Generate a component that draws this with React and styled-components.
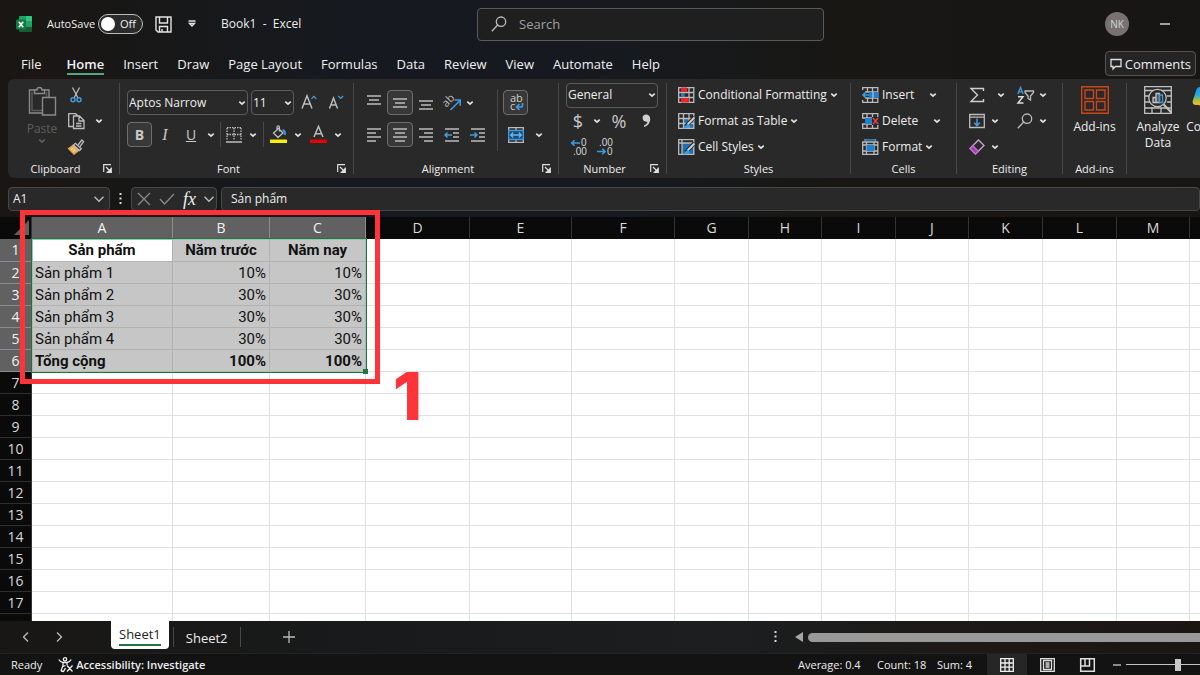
import React from "react";
import styled, { createGlobalStyle, css } from "styled-components";

const UI = `"Open Sans", "Noto Sans", sans-serif`;
const CELL = `Roboto, "Noto Sans", sans-serif`;

const GlobalStyle = createGlobalStyle`
  *, *::before, *::after { box-sizing: border-box; }
  body { margin: 0; background: #0a0a0a; }
  button, input, select { font: inherit; color: inherit; }
  button { padding: 0; border: 0; background: none; cursor: pointer; }
`;

const Window = styled.div`
  display: flex;
  flex-direction: column;
  height: 100vh;
  overflow: hidden;
  color: #eeeeee;
  font: 12px/16px ${UI};
  background: linear-gradient(90deg, #1a1613 0%, #171819 16%, #161a20 30%, #161a20 48%, #181714 70%, #171614 100%);
  svg { display: block; flex: none; overflow: visible; }
`;

/* ---------- title bar ---------- */
const TitleBar = styled.header`
  display: grid;
  grid-template-columns: 477px minmax(0, 347px) 1fr;
  align-items: center;
  height: 48px;
`;
const TitleLeft = styled.div`
  display: flex;
  align-items: center;
  padding-left: 16px;
`;
const AutoSave = styled.label`
  display: flex;
  align-items: center;
  gap: 3px;
  margin: 0 12px 0 14px;
  font-size: 11px;
`;
const Toggle = styled.span`
  display: grid;
  align-items: center;
  width: 45px;
  height: 20px;
  > * { grid-area: 1 / 1; }
  > span { padding-left: 22px; pointer-events: none; }
`;
const Switch = styled.input`
  appearance: none;
  display: flex;
  align-items: center;
  width: 100%;
  height: 20px;
  margin: 0;
  padding-left: 2px;
  border: 1px solid #bdbdbd;
  border-radius: 10px;
  background: #2b2b2b;
  &::before {
    content: "";
    width: 14px;
    height: 14px;
    border-radius: 50%;
    background: #fff;
  }
`;
const QuickMenu = styled.button` margin: 0 25px 0 16px; `;
const DocName = styled.span` white-space: pre; `;
const SearchBox = styled.label`
  display: flex;
  align-items: center;
  gap: 12px;
  height: 33px;
  padding-left: 13px;
  border: 1px solid #5a5a5a;
  border-radius: 4px;
  background: #1f1f1f;
  color: #a6a6a6;
`;
const BareInput = styled.input`
  flex: 1;
  min-width: 0;
  padding: 0;
  border: 0;
  outline: 0;
  background: none;
  font-size: 13px;
  &::placeholder { color: #a0a0a0; opacity: 1; }
`;
const TitleRight = styled.div`
  display: flex;
  align-items: center;
  justify-content: flex-end;
  gap: 31px;
  padding-right: 30px;
`;
const Avatar = styled.button`
  width: 24px;
  height: 24px;
  border-radius: 50%;
  background: #777271;
  color: #d8d5d4;
  font-size: 10px;
`;

/* ---------- ribbon tabs ---------- */
const TabRow = styled.nav`
  display: flex;
  align-items: center;
  gap: 19px;
  height: 31px;
  padding: 0 4px 0 21px;
  font-size: 13px;
`;
const Tab = styled.a`
  display: block;
  height: 23px;
  padding-top: 3px;
  line-height: 18px;
  color: #f0f0f0;
  text-decoration: none;
  white-space: nowrap;
  border-bottom: 2px solid transparent;
  &:first-child { margin-right: 6px; }
  ${(p) => p.$active && css`
    font-weight: 600;
    border-color: #57a67c;
  `}
`;
const Comments = styled.button`
  display: flex;
  align-items: center;
  gap: 3px;
  height: 25px;
  margin-left: auto;
  padding: 0 4px;
  border: 1px solid #555;
  border-radius: 4px;
  background: #242424;
`;

/* ---------- ribbon ---------- */
const Ribbon = styled.section`
  display: flex;
  height: 99px;
  margin-left: 8px;
  border-radius: 6px 0 0 6px;
  background: #292929;
  overflow: hidden;
`;
const GroupBox = styled.div`
  display: flex;
  flex-direction: column;
  flex: ${(p) => (p.$w ? `0 0 ${p.$w}px` : "1 0 0")};
  min-width: 0;
  padding: 3px 0 1px;
`;
const Rule = styled.div`
  flex: none;
  width: 1px;
  height: ${(p) => p.$h || 91}px;
  margin: ${(p) => p.$m || "4px 0"};
  background: #484848;
`;
const GroupBody = styled.div`
  display: flex;
  height: 78px;
  padding-left: ${(p) => p.$pad || 0}px;
`;
const GroupFoot = styled.div`
  display: grid;
  grid-template-columns: ${(p) => (p.$launcher ? "1fr 16px" : "1fr")};
  align-items: center;
  height: 17px;
  font-size: 11px;
  text-align: center;
  white-space: nowrap;
`;
const Stack = styled.div`
  display: flex;
  flex-direction: column;
  gap: ${(p) => p.$gap || 0}px;
  padding-top: ${(p) => p.$top || 0}px;
`;
const Row = styled.div`
  display: flex;
  align-items: center;
  gap: ${(p) => p.$gap || 0}px;
  height: ${(p) => p.$h || 26}px;
`;
const Tool = styled.button`
  display: grid;
  place-items: center;
  flex: none;
  width: ${(p) => p.$w || 26}px;
  height: 25px;
  border: 1px solid ${(p) => (p.$on ? "#6e6e6e" : "transparent")};
  border-radius: 4px;
  background: ${(p) => (p.$on ? "#383838" : "none")};
`;
const Letter = styled.span`
  font-family: ${(p) => (p.$serif ? `"Liberation Serif", serif` : UI)};
  font-size: ${(p) => p.$size || 14}px;
  line-height: 20px;
  font-weight: ${(p) => p.$weight || 400};
  color: #c8c8c8;
`;
const SelectWrap = styled.label`
  display: grid;
  align-items: center;
  width: ${(p) => p.$w}px;
  > * { grid-area: 1 / 1; }
  > svg { justify-self: end; margin-right: 2px; pointer-events: none; }
`;
const Select = styled.select`
  appearance: none;
  width: 100%;
  height: 25px;
  padding: 0 1px;
  border: 1px solid #5c5c5c;
  border-radius: 4px;
  background: #292929;
  font-size: 12px;
`;
const Command = styled.button`
  display: flex;
  align-items: center;
  gap: 3px;
  height: 26px;
  white-space: nowrap;
  > svg:last-child { margin-left: ${(p) => p.$space || 0}px; }
`;
const BigButton = styled.button`
  display: flex;
  flex-direction: column;
  align-items: center;
  flex: none;
  width: ${(p) => p.$w}px;
  padding-top: 4px;
  color: ${(p) => (p.$dim ? "#5e5e5e" : "inherit")};
  > span { padding-top: 5px; line-height: 16px; }
`;

/* ---------- formula bar ---------- */
const FormulaBar = styled.div`
  display: flex;
  height: 24px;
  margin: 9px 0 6px 8px;
`;
const Field = styled.label`
  display: flex;
  align-items: center;
  flex: ${(p) => (p.$w ? `0 0 ${p.$w}px` : "1 1 0")};
  min-width: 0;
  padding: 0 5px 0 ${(p) => p.$pad || 4}px;
  border: 1px solid #474747;
  border-radius: 4px;
  background: #292929;
  input { width: 0; font-size: 12px; }
`;
const Dots = styled.div`
  display: grid;
  place-items: center;
  flex: none;
  width: 21px;
`;
const FxGroup = styled.div`
  display: flex;
  align-items: center;
  justify-content: space-between;
  flex: none;
  width: 86px;
  margin-right: 4px;
  padding: 0 2px 0 5px;
  border: 1px solid #474747;
  border-radius: 4px;
  background: #292929;
`;
const Fx = styled.span`
  font: italic 18px/20px "Liberation Serif", serif;
`;

/* ---------- sheet ---------- */
const SheetArea = styled.main`
  position: relative;
  flex: 1;
  min-height: 0;
  background: #fff;
`;
const SheetClip = styled.div`
  height: 100%;
  overflow: hidden;
`;
const Grid = styled.table`
  table-layout: fixed;
  width: 1264px;
  border-collapse: separate;
  border-spacing: 0;
  font: 15px/20px ${CELL};
  color: #111;
`;
const HeadCell = styled.th`
  height: 22px;
  padding: 0;
  font: 14px/20px ${UI};
  color: ${(p) => (p.$on ? "#f2f2f2" : "#d8d8d8")};
  background: ${(p) => (p.$on ? "#616161" : "#0a0a0a")};
  border-right: 1px solid ${(p) => (p.$on ? "#8c8c8c" : "#333")};
  border-bottom: 1px solid ${(p) => (p.$row ? (p.$on ? "#8c8c8c" : "#2e2e2e") : "transparent")};
`;
const Corner = styled(HeadCell)`
  svg { margin-left: auto; }
`;
const SheetRow = styled.tr`
  &:first-child > * { height: 23px; }
`;
const Cell = styled.td`
  height: 22px;
  padding: 0 3px;
  white-space: nowrap;
  border-right: 1px solid #e1e1e1;
  border-bottom: 1px solid #e1e1e1;
  text-align: ${(p) => p.$align || "left"};
  font-weight: ${(p) => (p.$bold ? 700 : 400)};
  ${(p) => p.$picked && css`
    background: #c6c6c6;
    border-color: #b2b2b2;
  `}
  ${(p) => p.$active && css`
    background: #fff;
  `}
`;
const Selection = styled.div`
  position: absolute;
  left: 31px;
  top: 21px;
  width: 336px;
  height: 135px;
  border: 1px solid #217346;
  outline: 1px solid #9fc2ae;
  outline-offset: -2px;
  &::after {
    content: "";
    position: absolute;
    right: -2px;
    bottom: -2px;
    width: 5px;
    height: 5px;
    background: #217346;
  }
`;
const Callout = styled.div`
  position: absolute;
  left: 20px;
  top: -7px;
  width: 360px;
  height: 174px;
  border: 5px solid #ff3338;
`;
const CalloutNumber = styled.div`
  position: absolute;
  left: 393px;
  top: 146px;
  font: 800 66px/66px Inter, sans-serif;
  color: #ff3338;
`;

/* ---------- bottom bars ---------- */
const SheetBar = styled.nav`
  display: flex;
  align-items: center;
  height: 32px;
  padding-left: 22px;
  background: linear-gradient(90deg, #181715, #191b1d 40%, #1c1e20 60%, #1c1917 80%, #1c1613);
`;
const SheetTab = styled.a`
  align-self: ${(p) => (p.$active ? "flex-start" : "center")};
  height: ${(p) => (p.$active ? 28 : 24)}px;
  padding: 3px 8px 0;
  border-radius: 0 0 4px 4px;
  font-size: 13px;
  line-height: 20px;
  color: #eee;
  text-decoration: none;
  ${(p) => p.$active && css`
    background: #fff;
    color: #222;
    > span { display: block; border-bottom: 2px solid #217346; }
  `}
`;
const NavButtons = styled.div`
  display: flex;
  gap: 25px;
  width: 89px;
`;
const AddSheet = styled.button` margin-left: 42px; `;
const ScrollGroup = styled.div`
  display: flex;
  align-items: center;
  gap: 5px;
  flex: 0 0 435px;
  margin-left: auto;
`;
const ScrollTrack = styled.div`
  display: flex;
  align-items: center;
  flex: 1;
  gap: 5px;
  padding-left: 4px;
`;
const ScrollThumb = styled.div`
  flex: 1;
  height: 9px;
  border-radius: 5px 0 0 5px;
  background: #999;
`;
const StatusBar = styled.footer`
  display: flex;
  align-items: center;
  height: 22px;
  padding-left: 11px;
  background: #131313;
  border-top: 1px solid #222;
  font-size: 11px;
  white-space: nowrap;
`;
const Accessibility = styled.button`
  display: flex;
  align-items: center;
  gap: 3px;
  margin-left: 16px;
  font-weight: 600;
`;
const Stats = styled.div`
  display: grid;
  grid-template-columns: 79px 60px 50px;
  margin-left: auto;
`;
const ViewButton = styled.button`
  display: grid;
  place-items: center;
  width: 40px;
  height: 21px;
  background: ${(p) => (p.$on ? "#262626" : "none")};
`;
const Zoom = styled.label`
  display: flex;
  align-items: center;
  gap: 5px;
  width: 93px;
  padding-left: 6px;
`;
const Range = styled.input`
  appearance: none;
  flex: 1;
  min-width: 0;
  height: 12px;
  margin: 0;
  background: linear-gradient(#c4c4c4, #c4c4c4) center / 100% 1px no-repeat;
  &::-webkit-slider-thumb {
    appearance: none;
    width: 6px;
    height: 12px;
    background: #c8c8c8;
  }
`;

/* ---------- icons ---------- */
const G = "#bcbcbc";
const B = "#3f9be0";
const SMALL = `"Liberation Sans", sans-serif`;
const Icon = ({ w = 16, h = w, box = `0 0 ${w} ${h}`, color = G, sw = 1.3, children }) => (
  <svg width={w} height={h} viewBox={box} fill="none" stroke={color} strokeWidth={sw} aria-hidden="true">
    {children}
  </svg>
);
const Chevron = ({ color = "#e4e4e4" }) => (
  <Icon w={8} color={color} sw={1.7}><path d="M1.300 2.700 4 5.200 6.700 2.700" /></Icon>
);
const WideChevron = () => <Icon w={10} sw={1.4}><path d="M.5 2.800 5 7.300 9.500 2.800" /></Icon>;
const Lines = ({ rows, y0 = 2, step = 4 }) => (
  <Icon sw={1.6}>
    <path d={rows.map(([a, b], i) => `M${a} ${y0 + i * step}H${b}`).join("")} />
  </Icon>
);
const Launcher = () => (
  <Icon w={9} color="#e0e0e0" sw={1.2}>
    <path d="M.7 8V.7H8M3 3l4 4M8.300 3.500v4.800H3.500" />
    <path d="M8 4v4H4z" fill="#e0e0e0" stroke="none" />
  </Icon>
);
const ExcelLogo = () => (
  <svg width="17" height="17" viewBox="0 0 17 17" aria-hidden="true">
    <path d="M4 0h11a1 1 0 0 1 1 1v4H3V1a1 1 0 0 1 1-1z" fill="#21a366" />
    <path d="M10 0h5a1 1 0 0 1 1 1v4h-6z" fill="#33c481" />
    <path d="M3 5h13v6H3z" fill="#107c41" />
    <path d="M10 5h6v6h-6z" fill="#21a366" />
    <path d="M3 11h13v4a1 1 0 0 1-1 1H4a1 1 0 0 1-1-1z" fill="#185c37" />
    <rect y="3.500" width="10" height="10" rx="1" fill="#107c41" />
    <path d="m2.800 5.800 4.400 5.400M7.200 5.800l-4.400 5.400" stroke="#fff" strokeWidth="1.500" />
  </svg>
);
const SaveIcon = () => (
  <Icon w={17} color="#e4e4e4" sw={1.4}>
    <path d="M1 1h15v15H3L1 14zM4.500 1v6h8V1M4.500 16v-5.500h8V16M7 16v-3" />
  </Icon>
);
const SearchIcon = () => (
  <Icon><circle cx="10" cy="5.700" r="4.700" /><path d="M6.700 9 .8 15.200" /></Icon>
);
const PasteIcon = () => (
  <Icon w={28} h={30} color="#8a8a8a" sw={1.4}>
    <path d="M14 27H1.500V4H7M16 4h5v7" />
    <path d="M4 6v18.500h10M18.500 6v5" stroke="#5a5a5a" />
    <path d="M6.500 7.500V4H9a2.500 2.500 0 0 1 5 0h2.500v3.500z" />
    <path d="M14.500 11.500h13v17.500h-13z" fill="#292929" />
  </Icon>
);
const CutIcon = () => (
  <Icon w={12} h={16}>
    <path d="M2.500.5 8 11M9.500.5 4 11" />
    <g stroke={B} strokeWidth="1.500"><circle cx="3" cy="12.800" r="2" /><circle cx="9" cy="12.800" r="2" /></g>
  </Icon>
);
const CopyIcon = () => (
  <Icon w={17}>
    <path d="M5.500 13.500H.7V.7h7l2 2M5.500 3h6l4.500 4.500v8H5.500zM11 3.500V8h5M8 10.500h5.500M8 13h5.500" />
  </Icon>
);
const PainterIcon = () => (
  <Icon>
    <path d="m10 6 3.800-5 1.800 1.600L12 7.500" />
    <path d="M5.500 6 .5 9.500 6 15.200l5-4z" fill="#e9b665" stroke="#d9a655" />
    <path d="m7.300 4.300 6 5.500-1.800 1.700-6-5.500z" fill="#292929" />
    <path d="m3 11 2-1.500M5 13l2-2" stroke="#fbe3b0" strokeWidth="1" />
  </Icon>
);
const BordersIcon = () => (
  <Icon>
    <path d="M1 .7h14M1 1v12M15 1v12M8 1v12M1 7.500h14" strokeDasharray="1.500 1" />
    <path d="M0 15h16" strokeWidth="1.600" />
  </Icon>
);
const FillIcon = () => (
  <Icon w={17} h={17}>
    <path d="M8.500 2.500 13 7l-5 4.500L3.500 7zM7 4.500V1a1.200 1.200 0 0 1 2.400 0v4.500" />
    <path d="M12.500 4c2 .5 2.800 2 2.300 5" stroke={B} strokeWidth="2" />
    <path d="M0 13.500h17V17H0z" fill="#f7f200" stroke="none" />
  </Icon>
);
const FontColorIcon = () => (
  <Icon w={17} h={17}>
    <path d="M4 11 8.500.5 13 11M5.500 7.700h6" strokeWidth="1.500" />
    <path d="M0 13.500h17V17H0z" fill="#e60000" stroke="none" />
  </Icon>
);
const SizeIcon = ({ up }) => (
  <Icon w={16} h={16}>
    <path d={up ? "M1 13.500 6 .8l5 12.700M2.700 9h6.600" : "M1.500 13.500 5.500 3l4 10.500M3 10h5"} strokeWidth="1.500" />
    <path d={up ? "m10.500 3.800 2.400-2.400 2.400 2.400" : "m10.300 1 2.400 2.400L15.100 1"} stroke={B} />
  </Icon>
);
const OrientationIcon = () => (
  <Icon w={17} h={17}>
    <text x="-1" y="10" transform="rotate(-45 5 8)" fontSize="11" fontFamily={UI} fill={G} stroke="none">ab</text>
    <path d="M6.500 16 15.500 7M10.500 6h5.700v5.700" stroke={B} strokeWidth="1.600" />
  </Icon>
);
const IndentIcon = ({ right }) => (
  <Icon sw={1.5}>
    <path d="M1 2h14M9 6h6M9 10h6M1 14h14" />
    <path d={right ? "M0 8h7M4.500 5.500 7 8l-2.500 2.500" : "M8 8H1M3.500 5.500 1 8l2.500 2.500"} stroke={B} />
  </Icon>
);
const WrapIcon = () => (
  <Icon w={16} h={18}>
    <text x="2" y="8" fontSize="11" fontFamily={UI} fill="#cfcfcf" stroke="none">ab</text>
    <text x="2" y="16" fontSize="11" fontFamily={UI} fill="#cfcfcf" stroke="none">c</text>
    <path d="M14.500 9v2q0 2-2 2H8.500M11.500 10 8.500 13l3 3" stroke={B} strokeWidth="1.700" />
  </Icon>
);
const MergeIcon = () => (
  <Icon>
    <path d="M.7.7h14.600v14.600H.7zM8 .7V4M8 12v3.300" />
    <path d="M.7 3.500h14.600v9H.7z" fill="#1a4a70" stroke={B} />
    <path d="M3 8h10M5.200 5.500 2.700 8l2.500 2.500M10.800 5.500 13.300 8l-2.500 2.500" stroke="#69b8f0" />
  </Icon>
);
const DecimalIcon = ({ less }) => (
  <Icon w={17} h={17}>
    <g fontSize="10" fontFamily={SMALL} fill="#d4d4d4" stroke="none">
      <text x={less ? 2 : 10} y="7">{less ? ".00" : "0"}</text>
      <text x={less ? 10 : 2} y="16">{less ? "0" : ".00"}</text>
    </g>
    <path d={less ? "M0 12.500h8M5.300 9.800 8 12.500l-2.700 2.700" : "M9 4H.8M3.500 1.300.8 4l2.700 2.700"} stroke={B} strokeWidth="1.600" />
  </Icon>
);
const GridBase = () => <path d="M.7.7h15.100v14.600H.7zM.7 5.500h15M.7 10.500h15M5.500.7v14.600M11 .7v14.600" />;
const CondIcon = () => (
  <Icon w={17} h={16}>
    <GridBase />
    <path d="M3 6.300h3.500v3.500H3z" fill="#2b7cc0" stroke="none" />
    <path d="M3 .5h6v4.500H3zM3 11h8v4.500H3z" fill="#e8262c" stroke="none" />
  </Icon>
);
const TableIcon = ({ full }) => (
  <Icon w={17} h={16}>
    <path d={full ? "M4 4h11.800v11H4z" : "M6 6h9.800v9H6z"} fill="#1f6fb5" stroke="none" />
    {full ? <path d="M.7.7h15.100v14.600H.7zM.7 4h15M4 .7v14.600" /> : <GridBase />}
    <path d="M16.500 4 8 13" stroke="#292929" strokeWidth="4" />
    <path d="m16.500 4.500-7 7" strokeWidth="1.800" stroke="#d5d5d5" />
    <path d="M9.500 10.500 5 15.500l5.500-.5 1.500-2z" fill={B} stroke="none" />
  </Icon>
);
const InsertCellsIcon = () => (
  <Icon w={17} h={16}>
    <path d="M.7 3V.7h15.100v14.600H.7V13M5.500.7V5M10.500.7v14.600M3 5h12.800M3 11h12.800M5.500 11v4" />
    <path d="M7 5h9v6H7z" fill="#1f7fd0" stroke="none" />
    <path d="M11 5v6" />
    <path d="M7 8H1M4 5 1 8l3 3" stroke={B} strokeWidth="1.600" />
  </Icon>
);
const DeleteCellsIcon = () => (
  <Icon w={17} h={16}>
    <path d="M.7 5V.7h15.100V4M.7 11v4.300h15.100V12M5 .7V5M10.500.7V4M5 11v4M10.500 12v3M0 5h10M0 11h10" />
    <path d="M3 5h7v6H3z" fill="#1f7fd0" stroke="none" />
    <path d="m11 5 5 6M16 5l-5 6" stroke="#e0403a" strokeWidth="1.700" />
  </Icon>
);
const FormatCellsIcon = () => (
  <Icon w={17} h={16}>
    <path d="M.7 3h15.100v12.300H.7zM.7 12h15M4.500 3v12M12 3v12M.7 6h15" />
    <path d="M4.500 6H12v6H4.500z" fill="#1f7fd0" stroke="none" />
    <path d="M3 .8h10.500M3 0v2M13.500 0v2" stroke={B} />
  </Icon>
);
const SigmaIcon = () => (
  <Icon color="#cfcfcf" sw={1.4}><path d="M14.500 4V1.500H2L8.500 8 2 14.500h12.500V12" /></Icon>
);
const SortIcon = () => (
  <Icon w={17} h={17}>
    <path d="M.8 7 3.500.5 6.200 7M2 4.800h3" stroke={B} />
    <path d="M1 9.700h5L1 16h5.500" stroke="#dcdcdc" strokeWidth="1.500" />
    <path d="M8 4h8.500v1.500L13.500 9v4l-2.500-1.500V9L8 5.500z" />
  </Icon>
);
const FillDownIcon = () => (
  <Icon><path d="M.7 1.500h14.600v13H.7zM.7 4.200h14.600" /><path d="M8 5.500v7M5.200 9.800 8 12.600l2.800-2.800" stroke={B} strokeWidth="1.600" /></Icon>
);
const EraserIcon = () => (
  <Icon>
    <path d="m1 9.500 8.500-8.500L15 6.500 6.500 15z" stroke="#c9a6cf" />
    <path d="m1 9.500 2.800-2.800 5.500 5.500L6.500 15z" fill="#a63bb5" stroke="#c06ccc" />
  </Icon>
);
const AddinsIcon = () => (
  <Icon w={28} color="#c7461b" sw={1.4}>
    <path d="M.7.7h26.600v26.600H.7zM4 4h8.500v8.500H4zM15.500 4H24v8.500h-8.500zM4 15.500h8.500V24H4zM15.500 15.500H24V24h-8.500z" />
  </Icon>
);
const AnalyzeIcon = () => (
  <Icon w={28} color="#c2c2c2">
    <path d="M.7.7h26.600v26.600H.7zM.7 4.500h26.600M.7 10h5M.7 16h5M.7 22h26M8 21v6M17 22v5M23 10h4M23 16h4" />
    <circle cx="13.500" cy="12" r="8.700" fill="#292929" />
    <path d="M19.700 18.500 27.300 26.500" strokeWidth="2" />
    <path d="M9 11.500h3v5H9zM12 7.500h3.500v9H12z" fill="#e8e8e8" fillOpacity=".25" />
    <path d="M15.500 9h3v7.500h-3z" stroke={B} />
  </Icon>
);
const CopilotIcon = () => (
  <svg width="28" height="28" viewBox="0 0 28 28" aria-hidden="true">
    <defs>
      <linearGradient id="copilot" x1="0" y1="0" x2="0" y2="1">
        <stop offset="0" stopColor="#1a9cf0" /><stop offset=".3" stopColor="#2aa9d8" />
        <stop offset=".5" stopColor="#9cc04a" /><stop offset=".65" stopColor="#f0b82c" /><stop offset="1" stopColor="#f0543c" />
      </linearGradient>
    </defs>
    <path d="M8 1h9c3 0 4 2 5 5l4 12c1 4-1 9-6 9h-8c-2 0-3-2-3.500-4L7.500 19H4c-3 0-4-2-3-5l3-9c.8-2.500 2-4 4-4z" fill="url(#copilot)" />
  </svg>
);
const CommentIcon = () => (
  <Icon w={12} color="#e0e0e0"><path d="M1 1.500h10v7H5.500L3 11V8.500H1z" /></Icon>
);
const AccessIcon = () => (
  <Icon w={15} color="#f0f0f0" sw={1.3}>
    <circle cx="7" cy="2.300" r="1.700" />
    <path d="M.8 2.500c1 2 2.200 2.500 4.200 3v3L3 14M13.200 2.500c-1 2-2.200 2.500-4.200 3V8M5 5.500h4M5 9.500 7.500 8.500M9 8.500l5.500 6M14.500 8.500l-5.500 6M3 14l2.500.5 2-3.500" />
  </Icon>
);
const NormalViewIcon = () => (
  <Icon w={14} color="#f0f0f0" sw={1.3}><path d="M.7.7h12.600v12.600H.7zM.7 5h12.600M.7 9.200h12.600M5 .7v12.600M9.200.7v12.600" /></Icon>
);
const PageViewIcon = () => (
  <Icon w={15} h={14} color="#e0e0e0"><path d="M.7.7h13.600v12.600H.7zM3.500 2.500h8v9h-8zM5.500 5h4M5.500 7h4M5.500 9h4" /></Icon>
);
const BreakViewIcon = () => (
  <Icon w={15} h={14} color="#e0e0e0" sw={1.5}><path d="M.7.7h13.600v12.600H.7zM.7 8h8.800V.7M5 .7V8" /></Icon>
);
const DotsIcon = () => (
  <svg width="3" height="12" viewBox="0 0 3 12" fill="#d8d8d8" aria-hidden="true">
    <path d="M.5 0h2v2h-2zM.5 4.500h2v2h-2zM.5 9h2v2h-2z" />
  </svg>
);

/* ---------- pieces ---------- */
const Group = ({ name, w, pad, launcher, children }) => (
  <>
    <GroupBox $w={w}>
      <GroupBody $pad={pad}>{children}</GroupBody>
      {name && (
        <GroupFoot $launcher={launcher}>
          <span>{name}</span>
          {launcher && <button aria-label={`${name} settings`}><Launcher /></button>}
        </GroupFoot>
      )}
    </GroupBox>
    {w && <Rule />}
  </>
);
const Btn = ({ label, children, ...rest }) => (
  <Tool aria-label={label} title={label} {...rest}>{children}</Tool>
);
const Drop = ({ label, w = 14 }) => <Btn label={`${label} options`} $w={w}><Chevron /></Btn>;
const Combo = ({ label, value, w }) => (
  <SelectWrap $w={w}>
    <Select aria-label={label} defaultValue={value}><option>{value}</option></Select>
    <Chevron />
  </SelectWrap>
);

const tabs = ["File", "Home", "Insert", "Draw", "Page Layout", "Formulas", "Data", "Review", "View", "Automate", "Help"];
const columns = [
  ["A", 141], ["B", 97], ["C", 96], ["D", 104], ["E", 102], ["F", 103], ["G", 74], ["H", 73],
  ["I", 74], ["J", 73], ["K", 74], ["L", 74], ["M", 73], ["N", 74],
];
const data = [
  ["Sản phẩm", "Năm trước", "Năm nay"],
  ["Sản phẩm 1", "10%", "10%"],
  ["Sản phẩm 2", "30%", "30%"],
  ["Sản phẩm 3", "30%", "30%"],
  ["Sản phẩm 4", "30%", "30%"],
  ["Tổng cộng", "100%", "100%"],
];

const Sheet = () => (
  <SheetArea>
    <SheetClip>
      <Grid>
        <colgroup>
          <col style={{ width: 32 }} />
          {columns.map(([c, w]) => <col key={c} style={{ width: w }} />)}
        </colgroup>
        <thead>
          <tr>
            <Corner aria-label="Select all">
              <svg width="18" height="17" viewBox="0 0 18 17" aria-hidden="true"><path d="M16 1v15H1z" fill="#616161" /></svg>
            </Corner>
            {columns.map(([c], i) => <HeadCell key={c} scope="col" $on={i < 3}>{c}</HeadCell>)}
          </tr>
        </thead>
        <tbody>
          {Array.from({ length: 18 }, (_, r) => (
            <SheetRow key={r}>
              <HeadCell scope="row" $row $on={r < 6}>{r < 17 && r + 1}</HeadCell>
              {columns.map(([c], i) => (
                <Cell
                  key={c}
                  $picked={r < 6 && i < 3}
                  $active={r === 0 && i === 0}
                  $bold={r === 0 || r === 5}
                  $align={r === 0 ? "center" : i > 0 ? "right" : "left"}
                >
                  {data[r]?.[i]}
                </Cell>
              ))}
            </SheetRow>
          ))}
        </tbody>
      </Grid>
    </SheetClip>
    <Selection />
    <Callout />
    <CalloutNumber>1</CalloutNumber>
  </SheetArea>
);

const THREE = [[1, 15], [3, 13], [1, 15]];

export default function App() {
  return (
    <Window>
      <GlobalStyle />
      <TitleBar>
        <TitleLeft>
          <ExcelLogo />
          <AutoSave>
            AutoSave
            <Toggle><Switch type="checkbox" role="switch" /><span>Off</span></Toggle>
          </AutoSave>
          <button aria-label="Save"><SaveIcon /></button>
          <QuickMenu aria-label="Customize Quick Access Toolbar">
            <Icon w={8} color="#e4e4e4" sw={1.3}><path d="M.5 1h7M1.500 3.500 4 6l2.500-2.500z" /></Icon>
          </QuickMenu>
          <DocName>{"Book1  -  Excel"}</DocName>
        </TitleLeft>
        <SearchBox>
          <SearchIcon />
          <BareInput type="search" placeholder="Search" aria-label="Search" />
        </SearchBox>
        <TitleRight>
          <Avatar>NK</Avatar>
          <button aria-label="Minimize"><Icon w={10} color="#eee"><path d="M0 5h10" /></Icon></button>
        </TitleRight>
      </TitleBar>

      <TabRow>
        {tabs.map((t) => <Tab key={t} href="#" $active={t === "Home"}>{t}</Tab>)}
        <Comments><CommentIcon />Comments</Comments>
      </TabRow>

      <Ribbon>
        <Group name="Clipboard" w={111} pad={13} launcher>
          <BigButton $w={42} $dim>
            <PasteIcon /><span>Paste</span><Chevron color="#5e5e5e" />
          </BigButton>
          <Stack>
            <Row><Btn label="Cut"><CutIcon /></Btn></Row>
            <Row><Btn label="Copy"><CopyIcon /></Btn><Drop label="Copy" w={20} /></Row>
            <Row><Btn label="Format Painter"><PainterIcon /></Btn></Row>
          </Stack>
        </Group>

        <Group name="Font" w={233} pad={7} launcher>
          <Stack $top={8} $gap={7}>
            <Row $h={25} $gap={3}>
              <Combo label="Font" value="Aptos Narrow" w={121} />
              <Combo label="Font size" value="11" w={43} />
              <Btn label="Increase Font Size" $w={24}><SizeIcon up /></Btn>
              <Btn label="Decrease Font Size" $w={24}><SizeIcon /></Btn>
            </Row>
            <Row $h={25}>
              <Btn label="Bold" $on $w={25}><Letter $weight={700}>B</Letter></Btn>
              <Btn label="Italic"><Letter as="i" $serif $size={16}>I</Letter></Btn>
              <Btn label="Underline"><Letter as="u">U</Letter></Btn>
              <Drop label="Underline" />
              <Rule $h={25} $m="0 4px 0 2px" />
              <Btn label="Borders" $w={18}><BordersIcon /></Btn>
              <Drop label="Borders" w={20} />
              <Rule $h={25} $m="0 4px 0 0" />
              <Btn label="Fill Color" $w={20}><FillIcon /></Btn>
              <Drop label="Fill Color" w={20} />
              <Btn label="Font Color" $w={20}><FontColorIcon /></Btn>
              <Drop label="Font Color" w={20} />
            </Row>
          </Stack>
        </Group>

        <Group name="Alignment" w={204} pad={7} launcher>
          <Stack $top={8} $gap={7}>
            <Row $h={25}>
              <Btn label="Top Align"><Lines rows={THREE} y0={1} /></Btn>
              <Btn label="Middle Align" $on><Lines rows={THREE} y0={4} /></Btn>
              <Btn label="Bottom Align"><Lines rows={THREE} y0={6} /></Btn>
              <Btn label="Orientation"><OrientationIcon /></Btn>
              <Drop label="Orientation" w={10} />
            </Row>
            <Row $h={25}>
              <Btn label="Align Left"><Lines rows={[[1, 15], [1, 10], [1, 15], [1, 10]]} /></Btn>
              <Btn label="Center" $on><Lines rows={[[1, 15], [3, 13], [1, 15], [3, 13]]} /></Btn>
              <Btn label="Align Right"><Lines rows={[[1, 15], [6, 15], [1, 15], [6, 15]]} /></Btn>
              <Btn label="Decrease Indent"><IndentIcon /></Btn>
              <Btn label="Increase Indent"><IndentIcon right /></Btn>
            </Row>
          </Stack>
          <Rule $h={62} $m="7px 5px 0 6px" />
          <Stack $top={8} $gap={7}>
            <Row $h={25}><Btn label="Wrap Text" $on $w={25}><WrapIcon /></Btn></Row>
            <Row $h={25}><Btn label="Merge and Center" $w={25}><MergeIcon /></Btn><Drop label="Merge" w={22} /></Row>
          </Stack>
        </Group>

        <Group name="Number" w={107} pad={7} launcher>
          <Stack>
            <Row><Combo label="Number format" value="General" w={92} /></Row>
            <Row>
              <Btn label="Currency" $w={24}><Letter $size={18}>$</Letter></Btn>
              <Drop label="Currency" />
              <Btn label="Percent" $w={30}><Letter $size={18}>%</Letter></Btn>
              <Btn label="Comma Style" $w={24}>
                <svg width="9" height="14" viewBox="0 0 9 14" fill="#d0d0d0" aria-hidden="true">
                  <path d="M4 .5c2.500 0 4.200 1.600 4.200 4.500 0 4-2.500 7-6.200 8v-1.500c2-.8 3.200-2 3.400-3.800C3 8.200.6 6.500.6 4 .6 2 2 .5 4 .5z" />
                </svg>
              </Btn>
            </Row>
            <Row>
              <Btn label="Increase Decimal"><DecimalIcon /></Btn>
              <Btn label="Decrease Decimal"><DecimalIcon less /></Btn>
            </Row>
          </Stack>
        </Group>

        <Group name="Styles" w={183} pad={11}>
          <Stack>
            <Command><CondIcon />Conditional Formatting<Chevron /></Command>
            <Command><TableIcon />Format as Table<Chevron /></Command>
            <Command><TableIcon full />Cell Styles<Chevron /></Command>
          </Stack>
        </Group>

        <Group name="Cells" w={105} pad={11}>
          <Stack>
            <Command $space={12}><InsertCellsIcon />Insert<Chevron /></Command>
            <Command $space={12}><DeleteCellsIcon />Delete<Chevron /></Command>
            <Command><FormatCellsIcon />Format<Chevron /></Command>
          </Stack>
        </Group>

        <Group name="Editing" w={105} pad={7}>
          <Stack>
            <Row><Btn label="AutoSum"><SigmaIcon /></Btn><Drop label="AutoSum" w={22} /></Row>
            <Row><Btn label="Fill"><FillDownIcon /></Btn><Drop label="Fill" w={10} /></Row>
            <Row><Btn label="Clear"><EraserIcon /></Btn><Drop label="Clear" w={10} /></Row>
          </Stack>
          <Stack>
            <Row><Btn label="Sort and Filter"><SortIcon /></Btn><Drop label="Sort" w={10} /></Row>
            <Row><Btn label="Find and Select"><SearchIcon /></Btn><Drop label="Find" w={10} /></Row>
          </Stack>
        </Group>

        <Group name="Add-ins" w={63}>
          <BigButton $w={63}><AddinsIcon /><span>Add-ins</span></BigButton>
        </Group>

        <Group pad={4}>
          <BigButton $w={54}><AnalyzeIcon /><span>Analyze<br />Data</span></BigButton>
          <BigButton $w={42}><CopilotIcon /><span>Copilot</span></BigButton>
        </Group>
      </Ribbon>

      <FormulaBar>
        <Field $w={102}>
          <BareInput defaultValue="A1" aria-label="Name box" />
          <WideChevron />
        </Field>
        <Dots><DotsIcon /></Dots>
        <FxGroup>
          <button aria-label="Cancel"><Icon w={14} color="#8a8a8a"><path d="m1 1 12 12M13 1 1 13" /></Icon></button>
          <button aria-label="Enter"><Icon w={16} h={14} color="#8a8a8a"><path d="m1 7 4.500 5L15 2" /></Icon></button>
          <button aria-label="Insert function"><Fx>fx</Fx></button>
          <WideChevron />
        </FxGroup>
        <Field $pad={9}>
          <BareInput defaultValue="Sản phẩm" aria-label="Formula" />
        </Field>
      </FormulaBar>

      <Sheet />

      <SheetBar>
        <NavButtons>
          <button aria-label="Previous sheet"><Icon w={8} h={10}><path d="M6 .5 1.500 5 6 9.500" /></Icon></button>
          <button aria-label="Next sheet"><Icon w={8} h={10}><path d="M2 .5 6.500 5 2 9.500" /></Icon></button>
        </NavButtons>
        <SheetTab href="#" $active><span>Sheet1</span></SheetTab>
        <Rule $h={20} $m="0 4px" />
        <SheetTab href="#">Sheet2</SheetTab>
        <Rule $h={20} $m="0 0 0 4px" />
        <AddSheet aria-label="New sheet"><Icon w={12}><path d="M6 0v12M0 6h12" /></Icon></AddSheet>
        <ScrollGroup>
          <Dots><DotsIcon /></Dots>
          <ScrollTrack>
            <svg width="8" height="10" viewBox="0 0 8 10" aria-hidden="true"><path d="M8 0v10L0 5z" fill="#a6a6a6" /></svg>
            <ScrollThumb />
          </ScrollTrack>
        </ScrollGroup>
      </SheetBar>

      <StatusBar>
        <span>Ready</span>
        <Accessibility><AccessIcon />Accessibility: Investigate</Accessibility>
        <Stats><span>Average: 0.4</span><span>Count: 18</span><span>Sum: 4</span></Stats>
        <ViewButton $on aria-label="Normal"><NormalViewIcon /></ViewButton>
        <ViewButton aria-label="Page Layout"><PageViewIcon /></ViewButton>
        <ViewButton aria-label="Page Break Preview"><BreakViewIcon /></ViewButton>
        <Zoom>
          <Icon w={8} color="#ccc"><path d="M0 4h8" /></Icon>
          <Range type="range" aria-label="Zoom" min="0" max="100" defaultValue="72" />
        </Zoom>
      </StatusBar>
    </Window>
  );
}
